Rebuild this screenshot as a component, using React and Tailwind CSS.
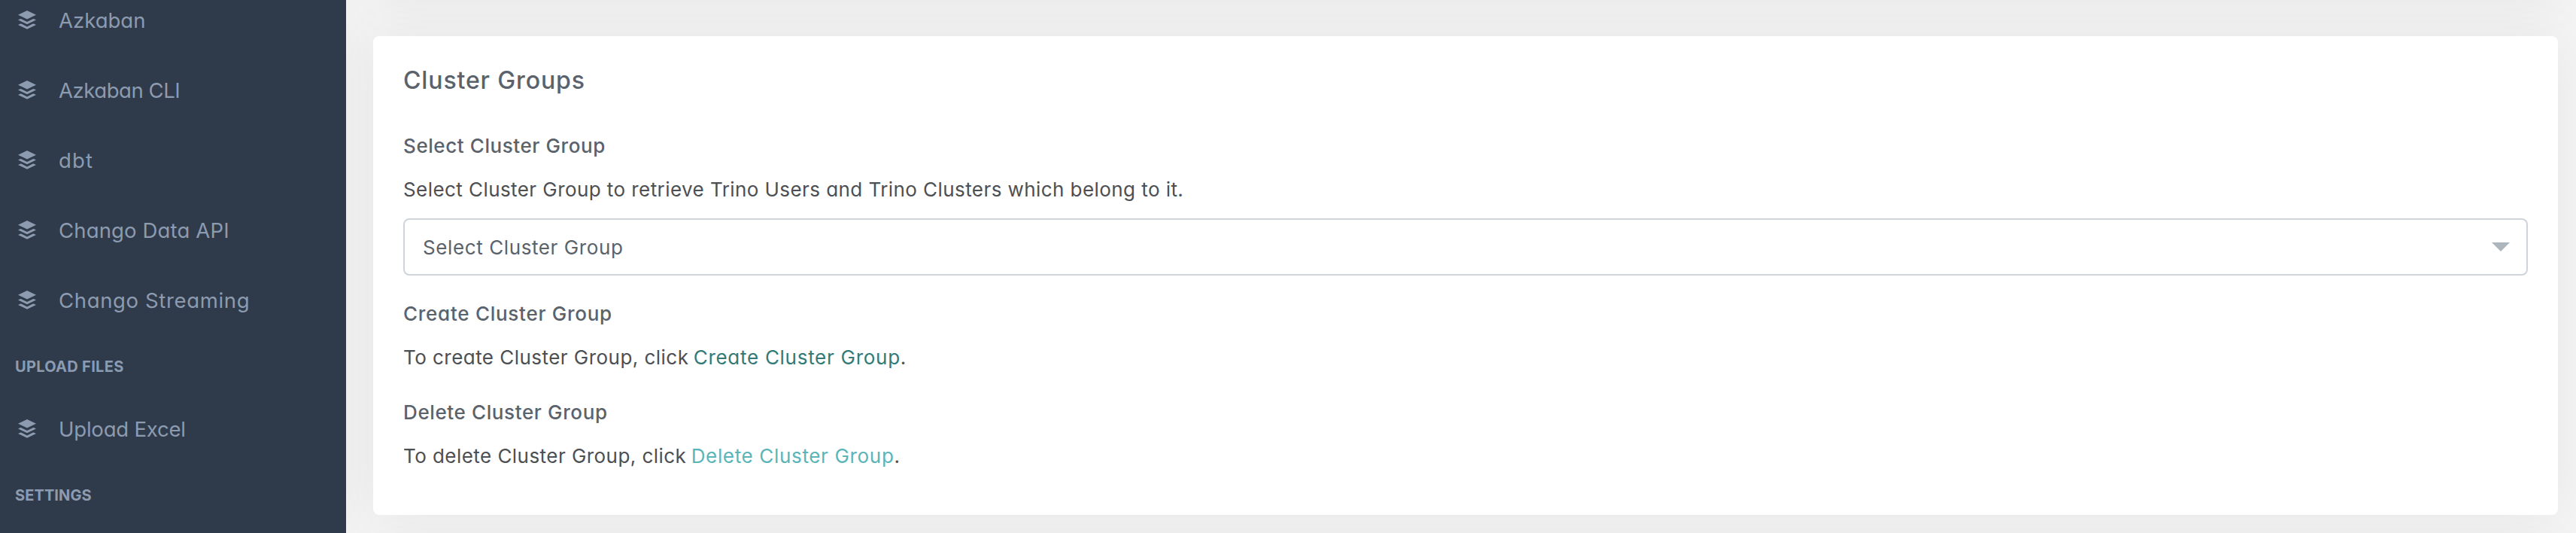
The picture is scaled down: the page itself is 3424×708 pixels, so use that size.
function LayersIcon() {
  return (
    <svg className="mb-[2px] h-[25px] w-6 shrink-0" viewBox="0 0 24 25" fill="currentColor">
      <path d="M12 0.1L24 5.7 12 11.5 0 5.7z" />
      <path d="M3.2 11.1Q4 11 4.8 11.4L12 15.1 19.2 11.4Q20 11 20.8 11.1L24 12.5 12 18.3 0 12.5z" />
      <path d="M3.2 17.5Q4 17.4 4.8 17.8L12 21.5 19.2 17.8Q20 17.4 20.8 17.5L24 18.9 12 24.7 0 18.9z" />
    </svg>
  );
}

function NavItem({ label, tracking }) {
  return (
    <li className="flex h-[93px] items-center pl-6">
      <LayersIcon />
      <span className={`ml-[30px] whitespace-nowrap text-[27.5px] leading-[41px] ${tracking}`}>{label}</span>
    </li>
  );
}

function NavHeading({ label, tracking }) {
  return (
    <li className={`flex h-[78px] items-center pl-5 pt-[3px] text-[20px] font-bold uppercase ${tracking}`}>{label}</li>
  );
}

function Sidebar() {
  return (
    <aside className="h-full w-[460px] shrink-0 overflow-hidden bg-[#2f3a4a] text-[#8c9bb0] shadow-[0_0_70px_rgba(0,0,0,0.04)]">
      <ul className="-mt-[19px]">
        <NavItem label="Azkaban" tracking="tracking-normal" />
        <NavItem label="Azkaban CLI" tracking="tracking-[-0.45px]" />
        <NavItem label="dbt" tracking="tracking-[1.2px]" />
        <NavItem label="Chango Data API" tracking="tracking-[0.15px]" />
        <NavItem label="Chango Streaming" tracking="tracking-[0.65px]" />
        <NavHeading label="Upload Files" tracking="tracking-[0.3px]" />
        <NavItem label="Upload Excel" tracking="tracking-[-0.2px]" />
        <NavHeading label="Settings" tracking="tracking-[0.1px]" />
      </ul>
    </aside>
  );
}

const card = "rounded-lg bg-white shadow-[0_0_70px_rgba(0,0,0,0.06)]";
const subheading = "font-medium leading-[40px] text-[#5a626b]";

export default function App() {
  return (
    <div className="flex h-[708px] w-[3424px] overflow-hidden bg-[#f4f4f4] font-[Inter,sans-serif] [font-feature-settings:'cv11']">
      <Sidebar />
      <main className="flex h-full min-w-0 flex-1 flex-col gap-12 overflow-hidden pl-9 pr-6">
        <div className={`-mt-[200px] h-[200px] shrink-0 ${card}`} />
        <section className={`h-[636px] shrink-0 px-10 text-[26px] text-[#4c4f53] ${card}`}>
          <h4 className="pt-[38px] text-[32px] font-medium leading-[42px] tracking-[0.87px] text-[#5a626b]">Cluster Groups</h4>
          <h5 className={`mt-[46px] tracking-[0.58px] ${subheading}`}>Select Cluster Group</h5>
          <p className="mt-[18px] leading-[40px] tracking-[0.43px]">
            Select Cluster Group to retrieve Trino Users and Trino Clusters which belong to it.
          </p>
          <div className="mt-[18px] flex h-[76px] items-center justify-between rounded-lg border-2 border-[#ced4da] pl-6 pr-[22px] text-[#5a626b]">
            <span className="tracking-[0.6px]">Select Cluster Group</span>
            <svg className="h-3 w-6" viewBox="0 0 24 12" fill="#adb5bd">
              <path d="M0 0h24L12 12z" />
            </svg>
          </div>
          <h5 className={`mt-[31px] tracking-[0.73px] ${subheading}`}>Create Cluster Group</h5>
          <p className="mt-[18px] leading-[40px]">
            <span className="tracking-[0.46px]">To create Cluster Group, click</span>{" "}
            <a className="-ml-px tracking-[0.72px] text-[#327a78]">Create Cluster Group</a>.
          </p>
          <h5 className={`mt-[33px] tracking-[0.62px] ${subheading}`}>Delete Cluster Group</h5>
          <p className="mt-[18px] leading-[40px]">
            <span className="tracking-[0.45px]">To delete Cluster Group, click</span>{" "}
            <a className="-ml-px tracking-[0.66px] text-[#5ab5b8]">Delete Cluster Group</a>.
          </p>
        </section>
        <div className={`h-[200px] shrink-0 ${card}`} />
      </main>
    </div>
  );
}
